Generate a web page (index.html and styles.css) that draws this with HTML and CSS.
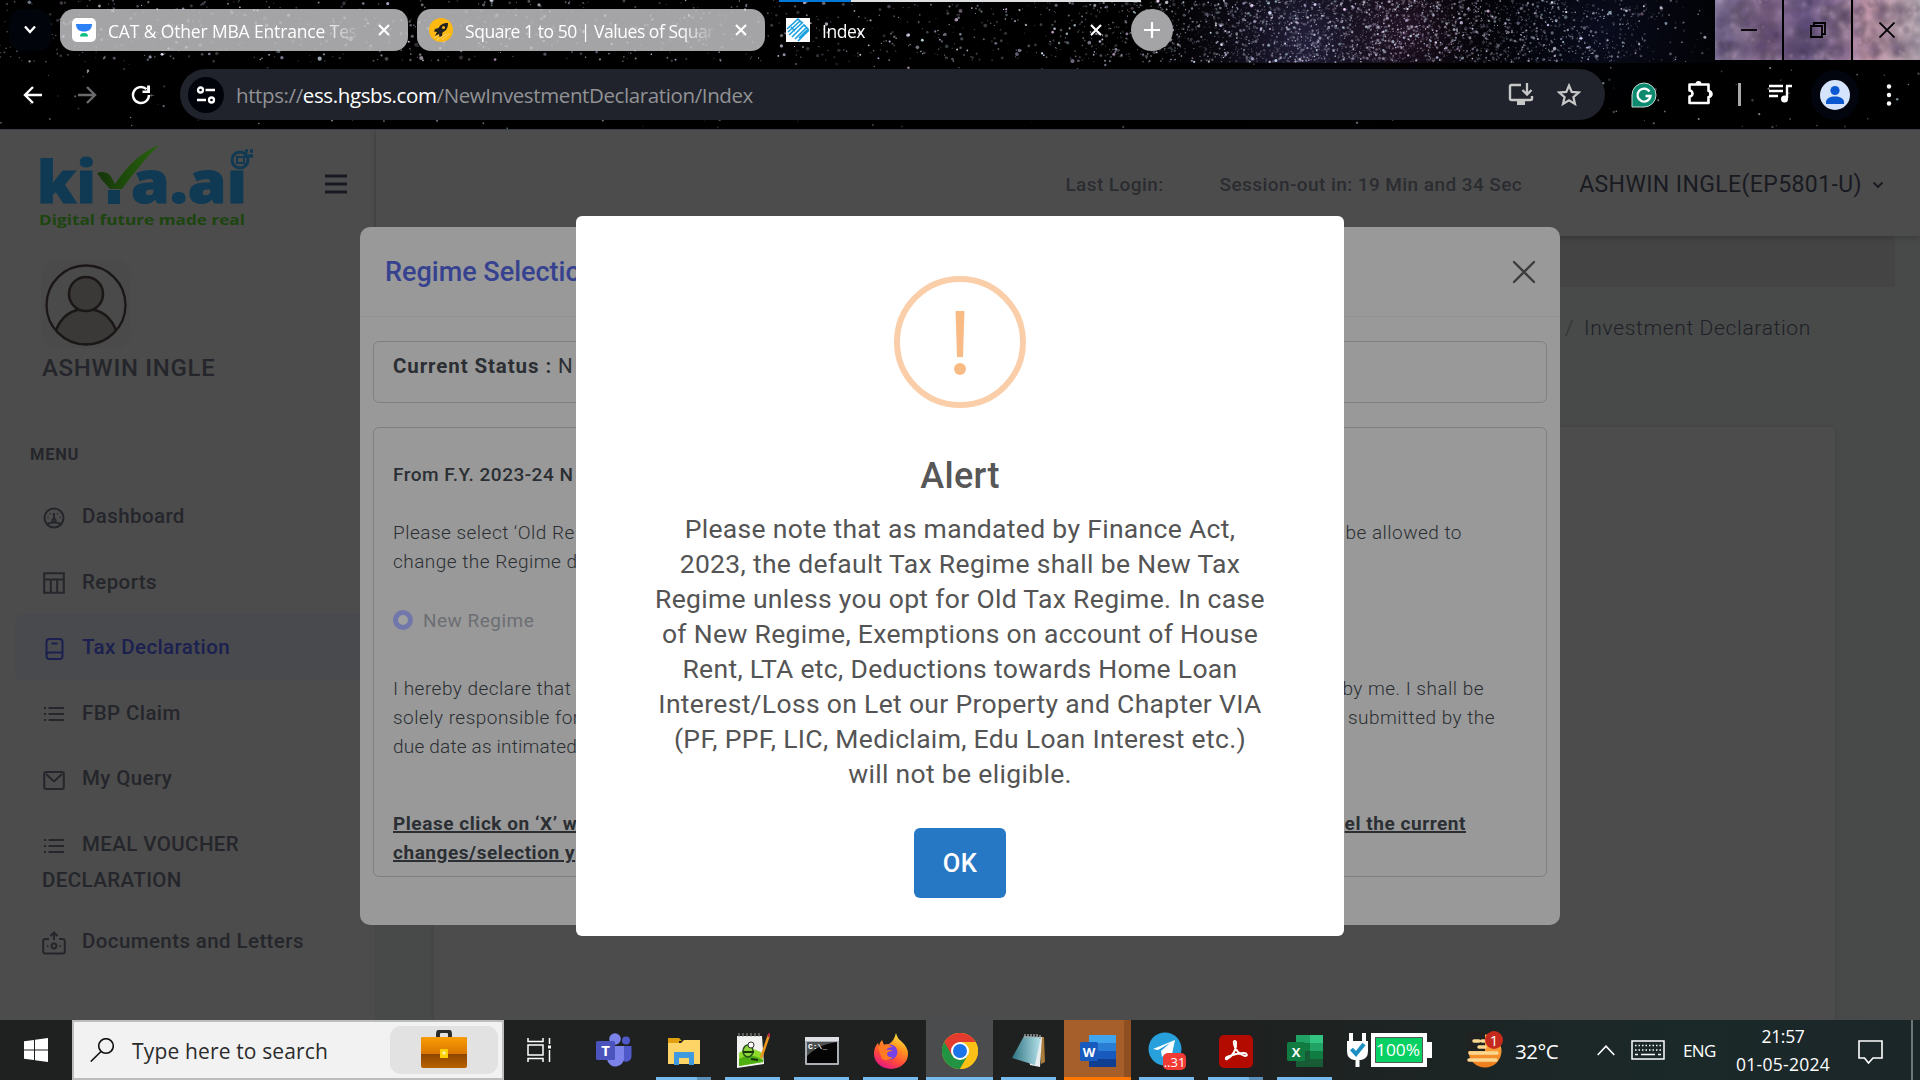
FILE: index.html
```html
<!DOCTYPE html>
<html lang="en">
<head>
<meta charset="utf-8">
<title>Index</title>
<link rel="stylesheet" href="styles.css">
</head>
<body>
<div class="screen">
  <header class="browser">
    <canvas class="stars" id="stars" width="1920" height="129"></canvas>
    <div class="load"><i></i></div>
    <div class="tabs">
      <div class="tabsearch"><svg width="16" height="12" viewBox="0 0 16 12"><path d="M3 2.500l5 5.500 5-5.500" fill="none" stroke="#fff" stroke-width="2.400"/></svg></div>
      <div class="tab">
        <svg class="fav" width="24" height="24" viewBox="0 0 24 24"><rect width="24" height="24" rx="5" fill="#fff"/><path d="M4 6h16c0 5-3 7.500-8 7.500S4 11 4 6z" fill="#2d81f7"/><path d="M8 18.500c0-2.500 1.500-3.500 4-3.500s4 1 4 3.500z" fill="#08bd80"/></svg>
        <span class="tabname faded t1">CAT &amp; Other MBA Entrance Tes</span>
        <svg class="x" width="14" height="14" viewBox="0 0 14 14"><path d="M2 2l10 10M12 2L2 12" stroke="#fff" stroke-width="2.200"/></svg>
      </div>
      <div class="tab">
        <svg class="fav" width="24" height="24" viewBox="0 0 24 24"><circle cx="12" cy="12" r="12" fill="#fdb812"/><path d="M19 5c-5 0-8 2-9.500 5L6 11l-1 2.500 3 .5-2 4 4-2 .5 3L13 18l.5-3.500C17 13 19 10 19 5z" fill="#222"/><circle cx="14.500" cy="9.500" r="1.500" fill="#fdb812"/><path d="M5 20l5-3M8 22l9-6M13 22l7-6" stroke="#fff" stroke-opacity=".4"/></svg>
        <span class="tabname faded t2">Square 1 to 50 | Values of Squar</span>
        <svg class="x" width="14" height="14" viewBox="0 0 14 14"><path d="M2 2l10 10M12 2L2 12" stroke="#fff" stroke-width="2.200"/></svg>
      </div>
      <div class="tab on">
        <svg class="fav" width="24" height="24" viewBox="0 0 24 24"><rect width="24" height="24" fill="#fff"/><path d="M1 11L12 1l4 4-10 9M2 14l12-11M3 17L17 4M6 19l6-6M12 13l6-6 4 4-9 9M9 21l12-12M12 23l11-11M5 9l4 4" fill="none" stroke="#1a9fe0" stroke-width="1.600"/></svg>
        <span class="tabname t2">Index</span>
        <svg class="x" width="14" height="14" viewBox="0 0 14 14"><path d="M2 2l10 10M12 2L2 12" stroke="#fff" stroke-width="2.200"/></svg>
      </div>
      <div class="newtab"><svg width="16" height="16" viewBox="0 0 16 16"><path d="M8 0v16M0 8h16" stroke="#fff" stroke-width="2.200"/></svg></div>
      <div class="winbtns">
        <span><svg width="16" height="16" viewBox="0 0 16 16"><path d="M0 8h16" stroke="#000" stroke-width="1.800"/></svg></span>
        <span><svg width="16" height="16" viewBox="0 0 16 16"><path d="M4 3V1h11v11h-3M1 4h11v11H1z" fill="none" stroke="#000" stroke-width="1.800"/></svg></span>
        <span><svg width="16" height="16" viewBox="0 0 16 16"><path d="M.5.5l15 15M15.500.5l-15 15" stroke="#000" stroke-width="1.800"/></svg></span>
      </div>
    </div>
    <div class="toolbar">
      <svg width="20" height="20" viewBox="0 0 20 20"><path d="M19 10H2.500M10 2l-8 8 8 8" fill="none" stroke="#fff" stroke-width="2.400"/></svg>
      <svg width="20" height="20" viewBox="0 0 20 20"><path d="M1 10h16.500M10 2l8 8-8 8" fill="none" stroke="#6b6b6d" stroke-width="2.400"/></svg>
      <svg width="20" height="20" viewBox="0 0 20 20"><path d="M18 10a8 8 0 1 1-2.500-5.800" fill="none" stroke="#fff" stroke-width="2.400"/><path d="M19 .5V8h-7.500V5.600h4.600V.5z" fill="#fff"/></svg>
      <div class="omni">
        <span class="site"><svg width="20" height="20" viewBox="0 0 20 20" fill="none" stroke="#fff" stroke-width="2.300"><circle cx="4.500" cy="5" r="2.500"/><path d="M9.500 5H19M1 15h9"/><circle cx="15.500" cy="15" r="2.500"/></svg></span>
        <span class="url">https://<b>ess.hgsbs.com</b>/NewInvestmentDeclaration/Index</span>
        <svg class="inst" width="26" height="24" viewBox="0 0 26 24"><path d="M13 2H3.500Q2 2 2 3.500v12Q2 17 3.500 17h19q1.500 0 1.500-1.500V13" fill="none" stroke="#c7c7c7" stroke-width="2.400"/><path d="M9 18h8v4H9z" fill="#c7c7c7"/><path d="M19 0v11M14.500 7l4.500 4.500L23.500 7" fill="none" stroke="#c7c7c7" stroke-width="2.300"/></svg>
        <svg class="star" width="24" height="24" viewBox="0 0 24 24"><path d="M12 2.500l2.700 6.400 7 .6-5.300 4.600 1.600 6.800-6-3.600-6 3.600 1.600-6.800L2.300 9.500l7-.6z" fill="none" stroke="#c7c7c7" stroke-width="2.200"/></svg>
      </div>
      <svg class="gram" width="26" height="26" viewBox="0 0 26 26"><path d="M1 25V13A12 12 0 1 1 13 25z" fill="#0b8a70" stroke="#c9d8d4" stroke-width="1"/><path d="M18.500 9.500A6.500 6.500 0 1 0 19.500 14h-5" fill="none" stroke="#fff" stroke-width="2.300"/></svg>
      <svg class="puz" width="26" height="26" viewBox="0 0 26 26"><path d="M2.500 4.500h19v6.500a2.600 2.600 0 0 1 0 6v6h-19v-6.500a3 3 0 0 0 0-6z" fill="none" stroke="#fff" stroke-width="2.600" stroke-linejoin="round"/><path d="M8.500 4a3 3 0 0 1 6 0zM22 11a3 3 0 0 1 0 6z" fill="#fff"/></svg>
      <i class="bar"></i>
      <svg class="list" width="24" height="20" viewBox="0 0 24 20"><path d="M0 2h14M0 7h14M0 12h9" stroke="#fff" stroke-width="2.300"/><path d="M18 2v12M17 2h6" stroke="#fff" stroke-width="2.400"/><circle cx="15.500" cy="15" r="3.500" fill="#fff"/></svg>
      <span class="me"><svg width="30" height="30" viewBox="0 0 30 30"><circle cx="15" cy="15" r="15" fill="#d6e3fc"/><circle cx="15" cy="10.500" r="4.600" fill="#0b57d0"/><path d="M6 24v-2c0-3.500 4-5.500 9-5.500s9 2 9 5.500v2z" fill="#0b57d0"/></svg></span>
      <svg class="dots" width="6" height="24" viewBox="0 0 6 24" fill="#fff"><circle cx="3" cy="3.500" r="2.200"/><circle cx="3" cy="12" r="2.200"/><circle cx="3" cy="20.500" r="2.200"/></svg>
    </div>
  </header>

  <main class="page">
    <aside class="side">
      <div class="brand">
        <svg width="216" height="86" viewBox="0 0 216 86">
          <defs><linearGradient id="lf"><stop offset="0" stop-color="#16330c"/><stop offset=".4" stop-color="#1d4a0b"/><stop offset="1" stop-color="#286010"/></linearGradient></defs>
          <g class="logo"><text x="-1" y="59" textLength="59" lengthAdjust="spacingAndGlyphs">ki</text><text x="93" y="59" textLength="116" lengthAdjust="spacingAndGlyphs">a.ai</text></g>
          <path d="M70 46h12v14H70z" fill="#103a54"/>
          <path d="M59 29q8-3 13 2l5 9Q96 11 121 1q-18 18-37 44H72q-8-8-13-16z" fill="url(#lf)"/>
          <rect x="190" y="4" width="26" height="21" fill="#4c4c4c"/><circle cx="202" cy="16" r="8" fill="none" stroke="#103a54" stroke-width="3"/><path d="M199 13h7v6h-7z" fill="none" stroke="#103a54" stroke-width="2"/><path d="M206 12h9M207 7h3M212 7h3" stroke="#103a54" stroke-width="3.500"/>
          <text class="tagline" x="1" y="81" textLength="206" lengthAdjust="spacingAndGlyphs">Digital future made real</text>
        </svg>
        <svg class="burger" width="22" height="20" viewBox="0 0 22 20"><path d="M0 2h22M0 10h22M0 18h22" stroke="#191a21" stroke-width="3"/></svg>
      </div>
      <div class="photo"><svg width="84" height="84" viewBox="0 0 84 84"><clipPath id="pc"><circle cx="42" cy="42" r="39.500"/></clipPath><path d="M11 82V70q8-24 31-24t31 24v12z" clip-path="url(#pc)" fill="#3a3937" stroke="#1b1716" stroke-width="2.500"/><circle cx="42" cy="31" r="17" fill="#3a3937" stroke="#1b1716" stroke-width="2.500"/><circle cx="42" cy="42" r="39.500" fill="none" stroke="#1b1716" stroke-width="2.300"/></svg></div>
      <div class="uname">ASHWIN INGLE</div>
      <div class="menuhead">MENU</div>
      <nav class="menu">
        <a><svg width="22" height="22" viewBox="0 0 22 22"><circle cx="11" cy="11" r="9.500"/><path d="M11 6v7M4 17q7-3 14 0M4.500 10.500h1M16.500 10.500h1M7 6.500l.7.7M15 6.500l-.7.7"/><circle cx="11" cy="13.500" r="1.600"/></svg>Dashboard</a>
        <a><svg width="22" height="22" viewBox="0 0 22 22"><path d="M1.200 1.200h19.600v19.600H1.200zM1.200 7.500h19.600M7.800 8v12M14.200 8v12"/></svg>Reports</a>
        <a class="cur"><svg width="22" height="22" viewBox="0 0 22 22"><rect x="3.500" y="1" width="16" height="20" rx="3"/><path d="M3.500 17q0-2.500 3-2.500h13M8.500 5.500h6"/></svg>Tax Declaration</a>
        <a><svg width="22" height="22" viewBox="0 0 22 22"><path d="M5.500 5H21M5.500 11H21M5.500 17H21M1 5h2M1 11h2M1 17h2"/></svg>FBP Claim</a>
        <a><svg width="22" height="22" viewBox="0 0 22 22"><rect x="1.200" y="3" width="19.600" height="17" rx="2"/><path d="M3 5l8 7.500L19 5"/></svg>My Query</a>
        <a class="two"><svg width="22" height="22" viewBox="0 0 22 22"><path d="M5.500 5H21M5.500 11H21M5.500 17H21M1 5h2M1 11h2M1 17h2"/></svg>MEAL VOUCHER<br>DECLARATION</a>
        <a><svg width="24" height="24" viewBox="0 0 24 24"><path d="M7 8H3.500Q1.200 8 1.200 10v10.500q0 2 2.300 2h17q2.300 0 2.300-2V10q0-2-2.300-2H17M12 9V2M8.500 5L12 1.500 15.500 5M5 15h1.500M17.500 15H19"/><circle cx="12" cy="15" r="2.400"/></svg>Documents and Letters</a>
      </nav>
    </aside>
    <section class="content">
      <div class="topbar">
        <span class="tl">Last Login:</span><span class="tl so">Session-out in: 19 Min and 34 Sec</span>
        <span class="who">ASHWIN INGLE(EP5801-U)</span>
        <svg width="12" height="8" viewBox="0 0 12 8"><path d="M1.500 1.500L6 6l4.500-4.500" fill="none" stroke="#191a21" stroke-width="1.800"/></svg>
      </div>
      <div class="strip"></div>
      <div class="crumb"><i>/</i><span>Investment Declaration</span></div>
      <div class="card"></div>
    </section>

    <div class="regime">
      <div class="rhead"><span>Regime Selectio</span><svg width="24" height="24" viewBox="0 0 24 24"><path d="M2 2l20 20M22 2L2 22" stroke="#3d3d3d" stroke-width="2.400" stroke-linecap="round"/></svg></div>
      <div class="box status"><b>Current Status :</b> <span>N</span></div>
      <div class="box decl">
        <div class="ln sb"><span>From F.Y. 2023-24 N</span><span class="e0">.</span></div>
        <div class="gap g1"></div>
        <div class="ln"><span>Please select ‘Old Re</span><span class="e1">be allowed to</span></div>
        <div class="ln"><span>change the Regime d</span></div>
        <div class="radio"><i></i><span>New Regime</span></div>
        <div class="ln"><span>I hereby declare that</span><span class="e2">by me. I shall be</span></div>
        <div class="ln"><span>solely responsible for</span><span class="e3">submitted by the</span></div>
        <div class="ln tight"><span>due date as intimated</span></div>
        <div class="gap g2"></div>
        <div class="ln bu"><span>Please click on ‘X’ w</span><span class="e4">el the current</span></div>
        <div class="ln bu"><span>changes/selection y</span></div>
      </div>
    </div>

    <div class="alert">
      <div class="warn"><svg width="14" height="66" viewBox="0 0 14 66"><path d="M2.500 0h9L10 46H4z" fill="#f8bb86"/><circle cx="7" cy="58" r="6" fill="#f8bb86"/></svg></div>
      <h2>Alert</h2>
      <p>Please note that as mandated by Finance Act,<br>2023, the default Tax Regime shall be New Tax<br>Regime unless you opt for Old Tax Regime. In case<br>of New Regime, Exemptions on account of House<br>Rent, LTA etc, Deductions towards Home Loan<br>Interest/Loss on Let our Property and Chapter VIA<br>(PF, PPF, LIC, Mediclaim, Edu Loan Interest etc.)<br>will not be eligible.</p>
      <button class="ok">OK</button>
    </div>
  </main>

  <footer class="taskbar">
    <div class="start"><svg width="24" height="24" viewBox="0 0 24 24" fill="#fff"><path d="M0 3.300L10 2v9.500H0zM11 1.800L24 0v11.500H11zM0 12.500h10V22L0 20.700zM11 12.500h13V24l-13-1.800z"/></svg></div>
    <div class="search">
      <svg width="24" height="24" viewBox="0 0 24 24"><circle cx="16" cy="8" r="7.300" fill="none" stroke="#111" stroke-width="1.600"/><path d="M11 13.500L.8 23.500" stroke="#111" stroke-width="1.600"/></svg>
      <span>Type here to search</span>
      <div class="brief"><svg width="46" height="38" viewBox="0 0 46 38"><defs><linearGradient id="bf" x2="0" y2="1"><stop offset="0" stop-color="#fb9d06"/><stop offset="1" stop-color="#d87500"/></linearGradient><linearGradient id="bg2" x2="0" y2="1"><stop offset="0" stop-color="#8a4400"/><stop offset=".5" stop-color="#8a4400"/><stop offset="1" stop-color="#b86200"/></linearGradient></defs><path d="M17 8V4q0-3 3-3h6q3 0 3 3v4" fill="none" stroke="#2b2b2b" stroke-width="4"/><rect y="7" width="46" height="31" rx="2" fill="url(#bg2)"/><path d="M0 9q0-2 2-2h42q2 0 2 2v15H0z" fill="url(#bf)"/><path d="M19 19h8v9h-8z" fill="#ffd005"/><path d="M21.500 21.500h3v3h-3z" fill="#fff3a8"/></svg></div>
    </div>
    <div class="tv"><svg width="26" height="24" viewBox="0 0 26 24" fill="none" stroke="#fff" stroke-width="1.500"><path d="M1 0v3.500h15V0M1 7h15v10H1zM1 24v-3.500h15V24M22.500 0v6M22.500 12v12"/><path d="M21 7.500h3v3h-3z" fill="#fff" stroke="none"/></svg></div>
    <div class="teams"><svg width="36" height="34" viewBox="0 0 36 34"><circle cx="19" cy="6" r="5.800" fill="#7b83eb"/><circle cx="30" cy="7.500" r="4" fill="#5059c9"/><path d="M26 13h9.500v10a5.500 5.500 0 0 1-9.500 4z" fill="#5059c9"/><path d="M11 13h17v11a8.500 8.500 0 0 1-17 2z" fill="#7b83eb"/><rect y="8" width="19" height="19" rx="1.500" fill="#4b53bc"/><text x="9.500" y="23" text-anchor="middle" class="ic" font-size="15">T</text></svg></div>
    <div class="app stk"><svg width="32" height="28" viewBox="0 0 32 28"><path d="M0 1h11l3 3h-3v4H0z" fill="#e0a00f"/><path d="M0 6h13l3-3h16v24H0z" fill="#ffd467"/><path d="M6 28V16q0-1 1-1h18q1 0 1 1v12h-5v-7H11v7z" fill="#3f9ae0"/></svg></div>
    <div class="app"><svg width="34" height="36" viewBox="0 0 34 36"><path d="M1 3h25l2 28-27 4z" fill="#f2f3f0"/><path d="M3 20q11-8 23 0l1 9-24 4z" fill="#8edb2d"/><path d="M3 26q11-7 24 1v2l-24 4z" fill="#4fae12"/><path d="M3 0v4M7 0v4M11 0v4M15 0v4M19 0v4M23 0v4" stroke="#999"/><ellipse cx="12" cy="18" rx="5" ry="6" fill="#8fd63c" stroke="#28501b" stroke-width="1.500"/><circle cx="15" cy="12" r="3" fill="#fff" stroke="#333"/><path d="M7 19h11M15 26l7 1" stroke="#18330c" stroke-width="1.800"/><path d="M33 2L25 25" stroke="#e8951d" stroke-width="2.600"/><path d="M33.500 0l-1 4" stroke="#b24" stroke-width="2"/></svg></div>
    <div class="app"><svg width="34" height="28" viewBox="0 0 34 28"><rect width="34" height="28" rx="1" fill="#a9afb5"/><path d="M0 0h34v4H0z" fill="#dde1e5"/><path d="M2 5h30v21H2z" fill="#050505"/><path d="M2 5h30q-18 2-30 14z" fill="#4d4f51"/><text x="3" y="12" class="ic mono" font-size="8">C:\_</text></svg></div>
    <div class="app"><svg width="34" height="36" viewBox="0 0 34 36"><defs><linearGradient id="ff" x1=".8" y1="0" x2=".3" y2="1"><stop offset="0" stop-color="#fff44f"/><stop offset=".35" stop-color="#ff9a1f"/><stop offset=".7" stop-color="#ff4a3a"/><stop offset="1" stop-color="#e31587"/></linearGradient></defs><path d="M22 0q1 5 5 8 7 6 7 13a17 15 0 0 1-34 0q0-7 4-11l1 3q1-4 3-6l2 5q3-1 5-1 5-3 7-11z" fill="url(#ff)"/><circle cx="16" cy="19" r="7.500" fill="#7542e5"/><path d="M4 14q8-5 15 0-5 0-7 3 4-1 7 1-6 0-6 3 1 4 6 3-5 5-11 2z" fill="#ff7a22"/></svg></div>
    <div class="app act"><svg width="36" height="36" viewBox="0 0 36 36"><circle cx="18" cy="18" r="18" fill="#fbc116"/><path d="M18 18L2.400 9A18 18 0 0 0 18 36l8-14z" fill="#229342"/><path d="M2.400 9A18 18 0 0 1 33.600 9H18l-8 13.500z" fill="#e33b2e"/><path d="M18 9h15.600A18 18 0 0 1 18 36l8-13.500z" fill="#fbc116"/><circle cx="18" cy="18" r="9" fill="#fff"/><circle cx="18" cy="18" r="7" fill="#1a73e8"/></svg></div>
    <div class="app"><svg width="34" height="34" viewBox="0 0 34 34"><defs><linearGradient id="np" x2="1"><stop offset="0" stop-color="#2f7382"/><stop offset="1" stop-color="#b5e2ea"/></linearGradient></defs><path d="M28 3h4l1 25-4 2z" fill="#a87b3a"/><path d="M12 3h18l-2 30-10-2z" fill="#e9edf0"/><path d="M12 2l17 1-6 28L0 24z" fill="url(#np)"/><path d="M13 0v4M16 0v4M19 0v4M22 0v4M25 0v4M28 1v4" stroke="#aaa" stroke-width="1.300"/></svg></div>
    <div class="app act word"><svg width="36" height="34" viewBox="0 0 36 34"><path d="M9 1h27v8H9z" fill="#41a5ee"/><path d="M9 9h27v8H9z" fill="#2b7cd3"/><path d="M9 17h27v8H9z" fill="#185abd"/><path d="M9 25h27v8H9z" fill="#103f91"/><rect y="8" width="18" height="19" rx="1.500" fill="#185abd"/><text x="9" y="22.500" text-anchor="middle" class="ic" font-size="13">W</text></svg></div>
    <div class="app"><svg width="38" height="38" viewBox="0 0 38 38"><circle cx="17" cy="17" r="16.500" fill="#27a0dc"/><path d="M5 17l22-9-4 19-6-5-3 3-1-6 9-8-12 7z" fill="#fff"/><rect x="15" y="21" width="23" height="17" rx="5" fill="#f23b35"/><text x="26.500" y="34.500" text-anchor="middle" class="ic thin" font-size="13">..31</text></svg></div>
    <div class="app stk"><svg width="34" height="34" viewBox="0 0 34 34"><rect width="34" height="33" y="1" rx="5" fill="#b30b00"/><path d="M8 25c6-3 10-10 9-17-1-2-3-1-2 2 1 6 6 11 11 12 3 0 2-3-1-3-6 0-12 2-17 4-2 1-1 3 0 2z" fill="none" stroke="#fff" stroke-width="2"/></svg></div>
    <div class="app"><svg width="36" height="34" viewBox="0 0 36 34"><path d="M9 1h14v8H9z" fill="#21a366"/><path d="M23 1h13v8H23z" fill="#33c481"/><path d="M9 9h14v8H9z" fill="#107c41"/><path d="M23 9h13v8H23z" fill="#21a366"/><path d="M9 17h27v16H9z" fill="#185c37"/><path d="M23 17h13v8H23z" fill="#107c41"/><rect y="8" width="18" height="19" rx="1.500" fill="#107c41"/><text x="9" y="22.500" text-anchor="middle" class="ic" font-size="13">X</text></svg></div>
    <div class="batt"><svg width="86" height="34" viewBox="0 0 86 34"><path d="M4 0v9M17 0v9M10.500 25v9" stroke="#fff" stroke-width="4"/><path d="M0 8h21v10q0 8-7 9H7q-7-1-7-9z" fill="#fff"/><path d="M4.500 16l4.500 5 8-10" fill="none" stroke="#1b8fc4" stroke-width="4"/><path d="M26 2h52v30H26z" fill="#07d064" stroke="#fff" stroke-width="4"/><path d="M28.500 4.500h47v25h-47z" fill="none" stroke="#555"/><path d="M80 9h5v16h-5z" fill="#fff"/><text x="29" y="23" textLength="44" lengthAdjust="spacingAndGlyphs" class="ic thin" font-size="17">100%</text></svg></div>
    <div class="wea"><svg width="38" height="38" viewBox="0 0 38 38"><defs><linearGradient id="wg" x2="0" y2="1"><stop offset="0" stop-color="#ffb74a"/><stop offset="1" stop-color="#ee7b1c"/></linearGradient></defs><circle cx="18" cy="20" r="16.500" fill="url(#wg)"/><path d="M0 0h18v20H0z" fill="#1f2221"/><path d="M7 10h5M15 10h3M3 22h27M12 16h6M2 29h27" stroke="#fbd790" stroke-width="3.500" stroke-linecap="round"/><circle cx="27" cy="9" r="9" fill="#c42b1c"/><text x="27" y="14.500" text-anchor="middle" class="ic thin" font-size="15">1</text></svg></div>
    <div class="temp">32°C</div>
    <svg class="chev" width="18" height="11" viewBox="0 0 18 11"><path d="M.7 10L9 1.200 17.300 10" fill="none" stroke="#fff" stroke-width="1.600"/></svg>
    <svg class="kb" width="34" height="20" viewBox="0 0 34 20"><path d="M1 1h32v18H1z" fill="none" stroke="#fff" stroke-width="1.500"/><path d="M4 5.500h26M4 10h26" stroke="#fff" stroke-width="1.500" stroke-dasharray="1.500 2"/><path d="M4 14.500h3M10 14.500h14M27 14.500h3" stroke="#fff" stroke-width="1.500"/></svg>
    <div class="eng">ENG</div>
    <div class="clock"><span class="time">21:57</span><span>01-05-2024</span></div>
    <svg class="note" width="25" height="25" viewBox="0 0 25 25"><path d="M1 1h23v17h-9l-4.500 5-4-5H1z" fill="none" stroke="#fff" stroke-width="1.600"/></svg>
    <i class="peek"></i>
  </footer>
</div>
<script src="stars.js"></script>
</body>
</html>
```
FILE: styles.css
```css
* { box-sizing: border-box; }
body { margin: 0; background: #4c4c4c; overflow: hidden; font-family: Roboto, "Open Sans", sans-serif; }
svg { display: block; flex: none; }
.screen { width: 1920px; height: 1080px; display: flex; flex-direction: column; }

/* browser chrome */
.browser { position: relative; height: 130px; background: #000; border-bottom: 1px solid #3a3e48; font-family: "Open Sans", "Noto Sans", sans-serif; color: #fff; flex: none; }
.stars { position: absolute; left: 0; top: 0; }
.load { position: absolute; left: 779px; top: 0; width: 362px; height: 2px; background: #dfe0e2; z-index: 2; }
.load i { display: block; width: 72px; height: 2px; background: #0078d7; }
.tabs { position: relative; display: flex; height: 60px; padding: 9px 0 9px 9px; }
.tabsearch { width: 42px; height: 42px; border-radius: 14px; background: #02040c; display: grid; place-items: center; margin-right: 9px; }
.tab { width: 348px; height: 42px; border-radius: 14px; background: rgba(200, 200, 202, .82); display: flex; align-items: center; padding: 0 17px 0 12px; margin-right: 9px; }
.tab.on { background: none; padding-right: 10px; width: 339px; margin-right: 18px; }
.tabname { margin-left: 12px; flex: 1; font-size: 17.500px; white-space: nowrap; overflow: hidden; padding-top: 2px; }
.t1 { letter-spacing: -.15px; }
.t2 { letter-spacing: -.46px; }
.faded { -webkit-mask-image: linear-gradient(90deg, #000 215px, transparent 252px); mask-image: linear-gradient(90deg, #000 215px, transparent 252px); }
.newtab { width: 42px; height: 42px; border-radius: 50%; background: #a4a4a6; display: grid; place-items: center; }
.winbtns { display: flex; gap: 2px; height: 60px; margin: -9px 0 0 auto; }
.winbtns span { width: 67px; display: grid; place-items: center; }
.toolbar { position: relative; display: flex; align-items: center; height: 51px; margin-top: 9px; padding-left: 23px; }
.toolbar > svg { margin-right: 34px; }
.omni { width: 1425px; height: 51px; margin-left: -5px; border-radius: 26px; background: #20232b; display: flex; align-items: center; padding: 0 24px 0 8px; }
.site { width: 36px; height: 36px; border-radius: 50%; background: #01030b; display: grid; place-items: center; }
.url { margin-left: 12px; font-size: 20.500px; letter-spacing: -.386px; color: #919295; }
.url b { font-weight: 400; color: #fff; }
.inst { margin: 0 23px 0 auto; }
.toolbar > .gram { margin: 0 0 0 26px; }
.toolbar > .puz { margin: -4px 0 0 30px; }
.bar { width: 3px; height: 23px; background: #a9a9ab; margin-left: 25px; }
.toolbar > .list { margin: -2px 0 0 28px; }
.me { width: 48px; height: 50px; border-radius: 50%; background: #02050d; display: grid; place-items: center; margin-left: 18px; }
.toolbar > .dots { margin: 0 0 0 27px; }

/* portal page */
.page { position: relative; flex: 1; display: flex; min-height: 0; overflow: hidden; background: #484a49; }
.side { width: 376px; background: #4c4c4c; border-right: 1px solid #484848; color: #25262b; flex: none; }
.brand { display: flex; padding: 14px 0 0 38px; height: 130px; }
.brand svg { overflow: visible; }
.logo { font: 800 58px "Open Sans", sans-serif; fill: #103a54; stroke: #103a54; stroke-width: 1; }
.tagline { font: 700 14px "Open Sans", sans-serif; fill: #1c450f; }
.burger { margin: 30px 0 0 71px; }
.photo { width: 90px; height: 88px; margin-left: 41px; border-radius: 16px; background: #4a4a4a; display: grid; place-items: center; }
.photo svg { margin-top: 2px; }
.uname { font-size: 24px; letter-spacing: .7px; font-weight: 500; line-height: 36px; margin: 2px 0 0 42px; white-space: nowrap; }
.menuhead { font-size: 16.500px; letter-spacing: .7px; font-weight: 700; line-height: 20px; margin: 59px 0 0 30px; }
.menu { margin: 18px 0 0 15px; display: flex; flex-direction: column; font-size: 20.500px; font-weight: 500; letter-spacing: .4px; }
.menu a { height: 65.600px; padding: 15px 0 0 27px; line-height: 36px; border-radius: 6px 0 0 6px; white-space: nowrap; }
.menu svg { display: inline-block; vertical-align: middle; width: 24px; margin: 0 16px 0 0; fill: none; stroke: currentColor; stroke-width: 2; }
.menu .cur { background: #484a4d; color: #1b2050; }
.menu .two { height: 97px; }
.content { flex: 1; }
.topbar { height: 106px; background: #4c4c4c; display: flex; align-items: center; padding: 3px 36px 0 0; justify-content: flex-end; box-shadow: 0 2px 6px rgba(0, 0, 0, .2); position: relative; color: #191a21; }
.tl { font-size: 19px; letter-spacing: .42px; font-weight: 500; color: #2b2c31; }
.so { margin: 0 57px 0 56px; }
.who { font-size: 23px; letter-spacing: .4px; margin-right: 10px; }
.strip { height: 51px; margin-right: 25px; background: #444; }
.crumb { display: flex; justify-content: flex-end; font-size: 21px; letter-spacing: .66px; font-weight: 300; line-height: 30px; margin: 26px 109px 0 0; color: #1e1f27; }
.crumb i { font-style: normal; margin-right: 10px; color: #303136; }
.card { margin: 84px 85px 0 58px; height: 700px; background: #4c4c4c; border-radius: 5px; box-shadow: 0 1px 5px rgba(0, 0, 0, .13); }

/* regime dialog */
.regime { position: absolute; left: 360px; top: 97px; width: 1200px; height: 698px; background: #999; border-radius: 10px; color: #2b2f33; font-size: 19px; letter-spacing: .48px; font-weight: 300; }
.rhead { height: 90px; border-bottom: 1px solid #929292; padding: 1px 24px 0 25px; display: flex; align-items: center; justify-content: space-between; font-size: 27px; letter-spacing: 0; font-weight: 500; color: #36428f; }
.box { border: 1px solid #808080; border-radius: 6px; margin: 0 13px; padding-left: 19px; white-space: nowrap; }
.status { margin-top: 24px; height: 62px; padding-top: 9px; line-height: 30px; font-size: 20.500px; letter-spacing: .9px; font-weight: 400; }
.status b { font-weight: 700; }
.decl { margin-top: 24px; height: 450px; padding-top: 32px; }
.ln { display: flex; justify-content: space-between; line-height: 29.200px; }
.e0 { margin-right: 203px; }
.e1 { margin-right: 84px; }
.e2 { margin-right: 62px; }
.e3 { margin-right: 51px; }
.e4 { margin-right: 80px; }
.tight { letter-spacing: .2px; }
.sb { font-weight: 500; }
.g1 { height: 29px; }
.radio { display: flex; align-items: center; height: 29px; margin: 29px 0 39px; color: #6c6e73; font-weight: 400; }
.radio i { width: 20px; height: 20px; border-radius: 50%; border: 5.500px solid #7177ab; background: #a0a0a0; margin-right: 10px; }
.g2 { height: 48px; }
.bu { font-weight: 700; letter-spacing: .55px; text-decoration: underline; text-decoration-thickness: 1.500px; }

/* alert */
.alert { position: absolute; left: 576px; top: 86px; width: 768px; height: 720px; background: #fff; border-radius: 6px; display: flex; flex-direction: column; align-items: center; color: #545454; }
.warn { width: 132px; height: 132px; border-radius: 50%; border: 6px solid #facea8; margin-top: 60px; padding-top: 4px; display: grid; place-items: center; }
.alert h2 { margin: 46px 0 0; font-size: 36px; letter-spacing: .3px; font-weight: 500; line-height: 44px; color: #575757; }
.alert p { margin: 13px 0 0; font-size: 26.500px; letter-spacing: .32px; line-height: 35px; text-align: center; white-space: nowrap; }
.ok { width: 92px; height: 70px; margin-top: 37px; border: 0; border-radius: 6px; background: #2778c4; color: #fff; font: 500 25.500px Roboto, sans-serif; letter-spacing: .4px; padding: 0; }

/* taskbar */
.taskbar { height: 60px; flex: none; display: flex; align-items: center; background: linear-gradient(90deg, #1e2120 65%, #1b2929 88%, #1b2628); color: #fff; font-family: "Open Sans", "Noto Sans", sans-serif; }
.start { width: 72px; padding-left: 24px; }
.search { width: 432px; height: 60px; border: 2px solid #bdbdbd; background: #f2f2f2; color: #2b2b2b; display: flex; align-items: center; padding: 0 4px 0 16px; font-size: 21px; letter-spacing: .15px; }
.search > span { margin: 2px 0 0 18px; }
.brief { width: 108px; height: 48px; border-radius: 11px; background: #e2e2e2; margin-left: auto; display: grid; place-items: center; padding-bottom: 3px; }
.tv { width: 72px; display: grid; place-items: center; }
.teams { width: 74px; padding-left: 1px; display: grid; place-items: center; }
.app { width: 69px; height: 60px; padding: 1px 2px 0 0; display: grid; place-items: center; background: linear-gradient(#76b9ed, #76b9ed) 6px 57px / 55px 3px no-repeat; }
.stk { background: linear-gradient(90deg, #76b9ed 41px, #5b8fb8 41px) 6px 57px / 55px 3px no-repeat; }
.act { background: linear-gradient(#76b9ed, #76b9ed) 0 57px / 67px 3px no-repeat, linear-gradient(#4b4c4d, #4b4c4d) 0 0 / 67px 60px no-repeat; }
.word { background: linear-gradient(#ff7700, #ff7700) 0 57px / 67px 3px no-repeat, linear-gradient(90deg, #a65f2a 60px, #8f4f21 60px) 0 0 / 67px 60px no-repeat; }
.ic { font-family: "Open Sans", sans-serif; font-weight: 700; fill: #fff; }
.ic.thin { font-weight: 400; }
.ic.mono { font-family: "Liberation Mono", monospace; }
.batt { margin-left: 7px; }
.wea { margin-left: 34px; }
.temp { margin-left: 10px; width: 43px; font-size: 20.500px; letter-spacing: -.5px; white-space: nowrap; padding-top: 2px; }
.chev { margin-left: 39px; }
.kb { margin-left: 16px; }
.eng { margin-left: 18px; width: 34px; font-size: 17px; letter-spacing: -.6px; padding-top: 1px; }
.clock { width: 98px; margin-left: 17px; display: flex; flex-direction: column; align-items: center; font-size: 17.500px; letter-spacing: .25px; line-height: 28px; white-space: nowrap; }
.time { letter-spacing: -.3px; }
.note { margin: 4px 0 0 26px; }
.peek { width: 2px; height: 60px; background: #6d7676; margin: 0 7px 0 auto; }
```
FILE: stars.js
```js
// Night-sky theme behind the tab strip, with a milky-way band on the right.
const c = document.getElementById('stars'), g = c.getContext('2d');
let s = 7;
const r = () => (s = (s * 16807) % 2147483647) / 2147483647;
const glow = (x, y, w, col) => {
  const q = g.createRadialGradient(x, y, 0, x, y, w);
  q.addColorStop(0, col); q.addColorStop(1, 'transparent');
  g.fillStyle = q; g.fillRect(x - w, y - w, 2 * w, 2 * w);
};
g.fillStyle = '#000'; g.fillRect(0, 0, 1920, 129);
glow(1310, 40, 190, 'rgba(50,45,85,.75)');
glow(1410, 30, 120, 'rgba(60,30,60,.6)');
glow(1600, 30, 220, 'rgba(14,18,44,.7)');
const star = (x, y, a, z) => {
  g.fillStyle = `rgba(${205 + r() * 50},${205 + r() * 45},255,${a})`;
  g.beginPath(); g.arc(x, y, z, 0, 7); g.fill();
};
for (let i = 0; i < 1000; i++) star(r() * 1180, r() * 62, .2 + r() * r() * .8, .5 + r() * r() * 1.7);
for (let i = 0; i < 3200; i++) star(1040 + (r() + r()) * 340, r() * 62, .12 + r() * r() * .88, .5 + r() * r() * 1.4);
g.fillStyle = 'rgba(0,0,0,.86)'; g.fillRect(0, 63, 1920, 66);
for (let i = 0; i < 200; i++) star(r() * 1920, 64 + r() * 65, .1 + r() * .5, .5 + r() * .8);
// pale nebula under the window buttons
const n = g.createLinearGradient(1715, 0, 1920, 0);
[['0', '#8b7fa6'], ['.25', '#8d6f93'], ['.45', '#6f5c8c'], ['.62', '#96789c'], ['.75', '#c79aad'], ['1', '#b9adb7']].forEach(([o, k]) => n.addColorStop(+o, k));
g.fillStyle = '#000'; g.fillRect(1715, 0, 205, 60);
for (const x of [1715, 1784, 1853]) {
  g.save(); g.beginPath(); g.rect(x, 0, 67, 60); g.clip();
  g.fillStyle = n; g.fillRect(x, 0, 67, 60);
  for (let i = 0; i < 60; i++) glow(x + r() * 67, r() * 60, 4 + r() * 12, r() > .5 ? 'rgba(225,195,220,.25)' : 'rgba(70,50,105,.25)');
  g.restore();
}
```
